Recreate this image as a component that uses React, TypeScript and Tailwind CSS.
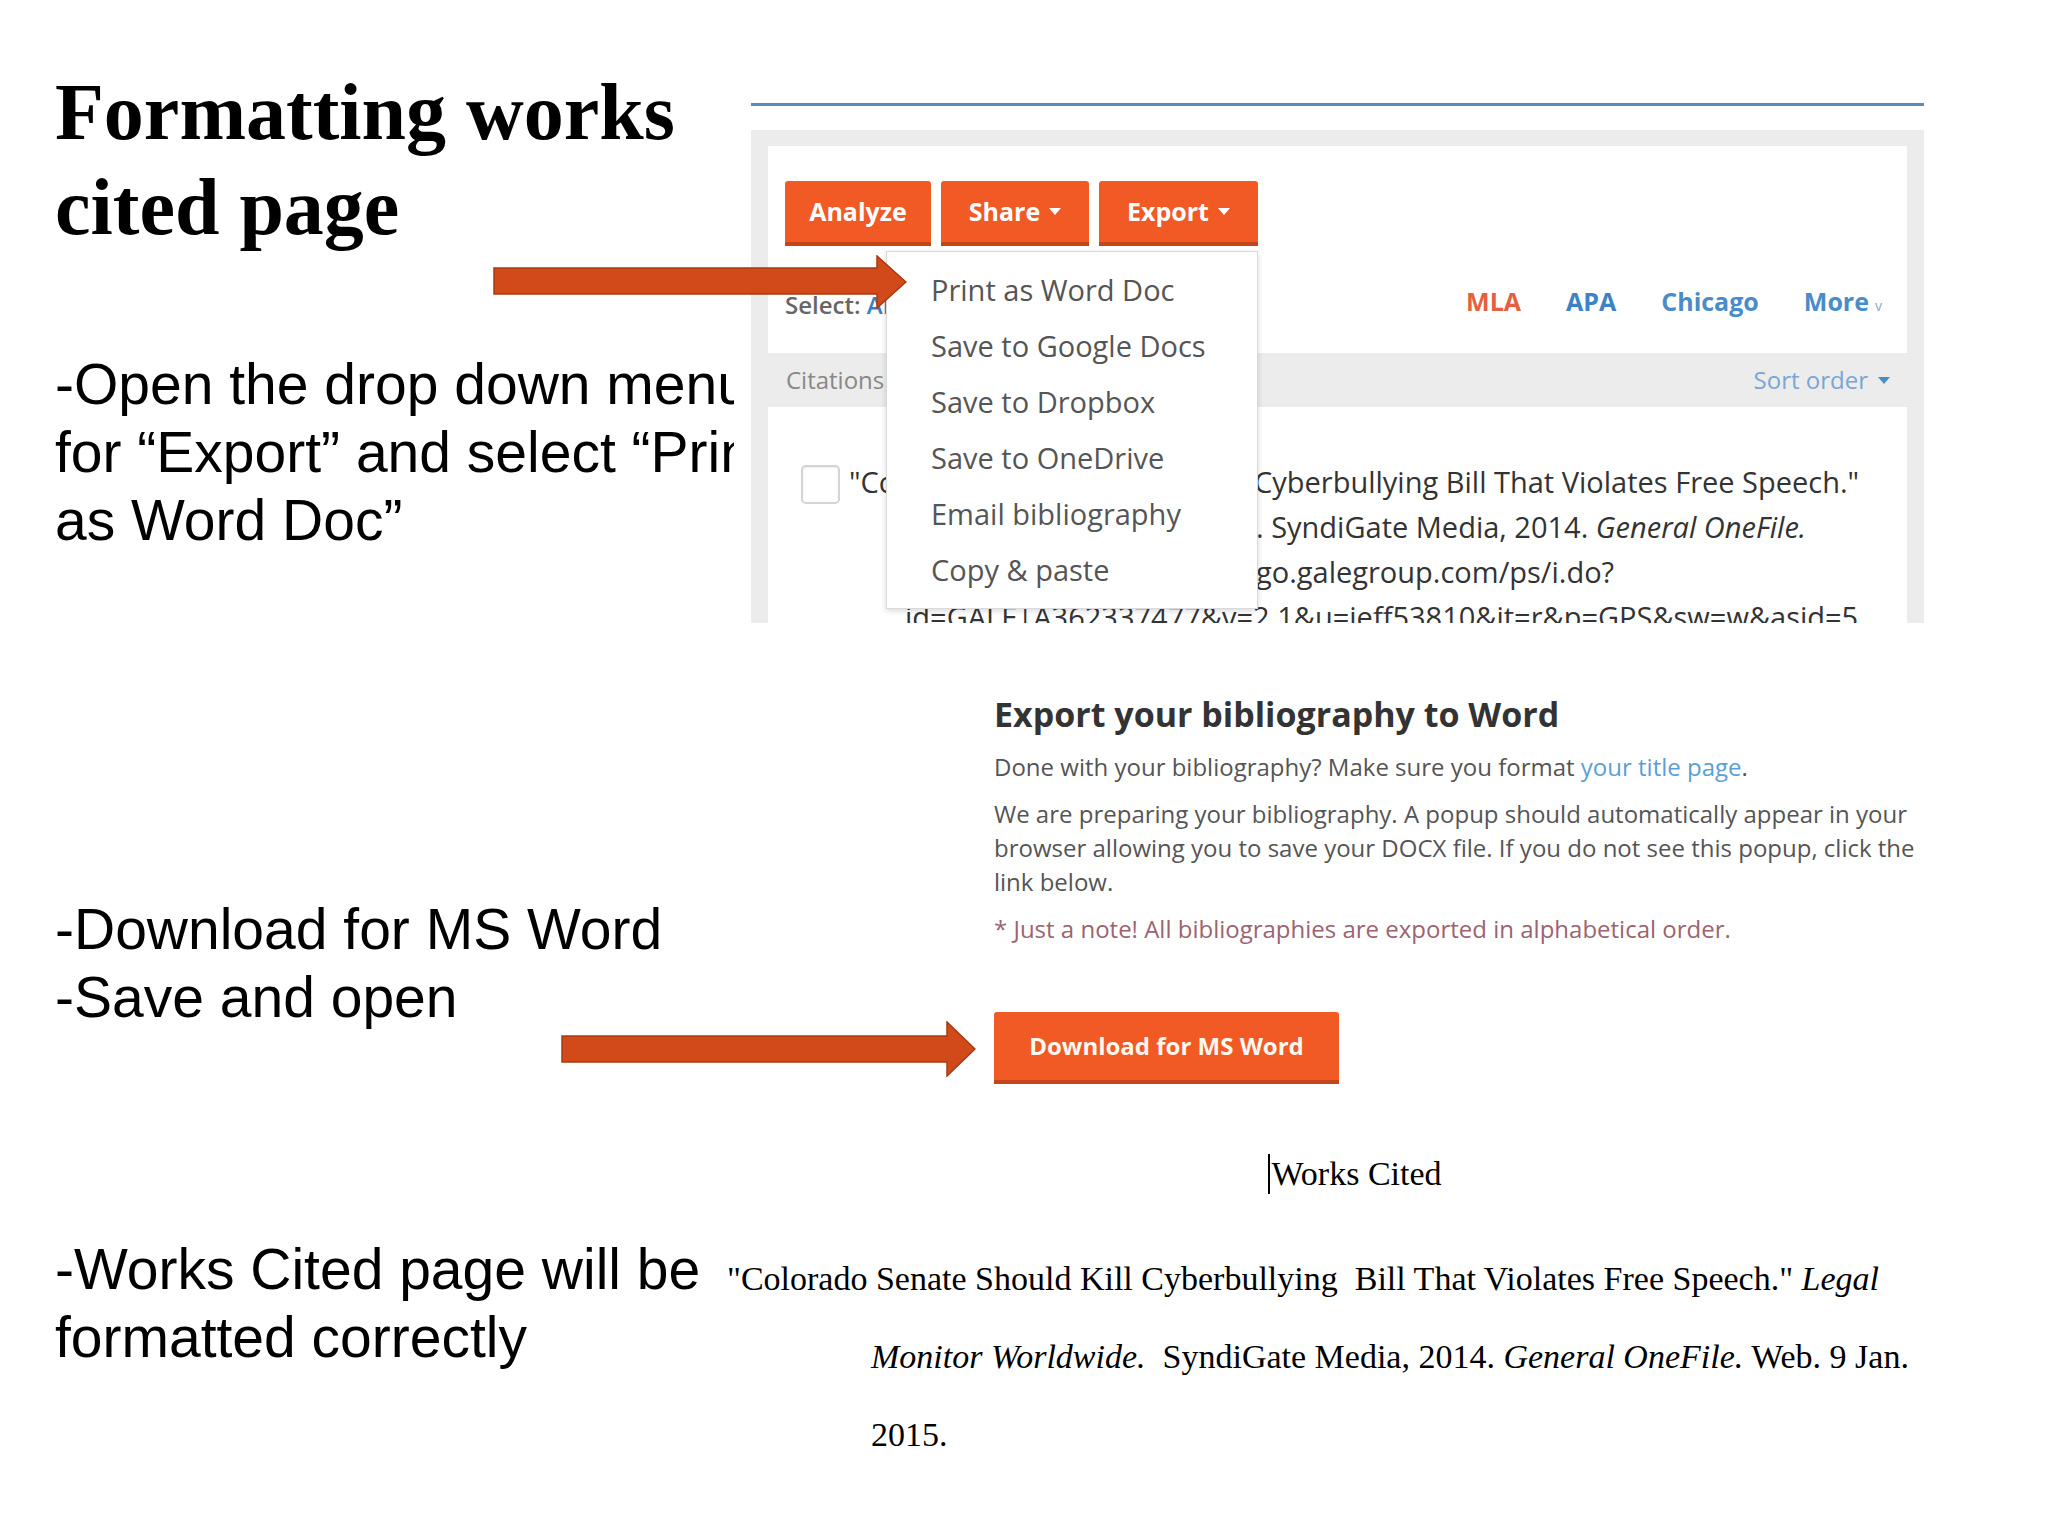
import React from "react";

const Caret = ({ color = "#ffffff", w = 12, h = 7 }: { color?: string; w?: number; h?: number }) => (
  <svg width={w} height={h} viewBox="0 0 12 7" className="inline-block">
    <path d="M0 0 H12 L6 7 Z" fill={color} />
  </svg>
);

const Arrow = ({ w, h, shaftTop, shaftBottom, base }: { w: number; h: number; shaftTop: number; shaftBottom: number; base: number }) => (
  <svg width={w} height={h} viewBox={`0 0 ${w} ${h}`}>
    <path
      d={`M1 ${shaftTop} H${base} V1 L${w - 1} ${h / 2} L${base} ${h - 1} V${shaftBottom} H1 Z`}
      fill="#d24a1a"
      stroke="#a63a12"
      strokeWidth="1.5"
      strokeLinejoin="miter"
    />
  </svg>
);

export default function App() {
  return (
    <div className="relative w-[2048px] h-[1536px] bg-white overflow-hidden text-black">
      {/* Section A */}
      <section className="flex h-[623px]">
        <div className="w-[734px] shrink-0 overflow-hidden whitespace-nowrap pl-[55px] pt-[65px]">
          <h1 className="font-['Liberation_Serif',serif] font-bold text-[80px] leading-[95px]">
            Formatting works
            <br />
            cited page
          </h1>
          <p className="mt-[95px] font-['Liberation_Sans',Arial,sans-serif] text-[57px] leading-[68px]">
            -Open the drop down menu
            <br />
            for “Export” and select “Print
            <br />
            as Word Doc”
          </p>
        </div>

        <div className="relative w-[1200px] shrink-0 h-full overflow-hidden pl-[17px] pt-[103px] font-['Open_Sans',sans-serif]">
          <div className="w-[1173px] h-[3px] bg-[#5b8bbb]" />
          <div className="mt-[24px] w-[1173px] h-[520px] bg-[#ececec] px-[17px] pt-[16px] flex flex-col">
            {/* Card 1 */}
            <div className="h-[207px] bg-white pt-[35px] pl-[17px] pr-[25px]">
              <div className="flex gap-[10px]">
                <div className="w-[146px] h-[65px] flex items-center justify-center bg-[#f15a24] border-b-4 border-[#c4451a] rounded-t-[3px] text-white font-bold text-[25px]">
                  Analyze
                </div>
                <div className="w-[148px] h-[65px] flex items-center justify-center gap-[9px] bg-[#f15a24] border-b-4 border-[#c4451a] rounded-t-[3px] text-white font-bold text-[25px]">
                  Share <Caret />
                </div>
                <div className="w-[159px] h-[65px] flex items-center justify-center gap-[9px] bg-[#f15a24] border-b-4 border-[#c4451a] rounded-t-[3px] text-white font-bold text-[25px]">
                  Export <Caret />
                </div>
              </div>
              <div className="mt-[43px] flex justify-between items-start h-[32px]">
                <span className="text-[24px] leading-[32px] font-semibold text-[#666]">
                  Select: <span className="text-[#3a7bc8]">All</span>
                </span>
                <div className="-mt-[4px] flex gap-[45px] text-[25px] leading-[32px] font-bold">
                  <span className="text-[#e4603f]">MLA</span>
                  <span className="text-[#3b82c6]">APA</span>
                  <span className="text-[#4a8cc7]">Chicago</span>
                  <span className="flex items-baseline gap-[6px] text-[#4a8cc7]">
                    More<span className="text-[14px] font-normal text-[#8aa8c8]">v</span>
                  </span>
                </div>
              </div>
            </div>
            {/* Citations row */}
            <div className="h-[54px] flex items-center justify-between pl-[18px] pr-[17px] text-[24px] leading-[32px]">
              <span className="text-[#888]">Citations (1)</span>
              <span className="flex items-center gap-[10px] text-[#7aa6d6]">
                Sort order <Caret color="#4a8cc7" />
              </span>
            </div>
            {/* Card 2 */}
            <div className="flex-1 bg-white pt-[52px] flex">
              <div className="ml-[33px] mt-[6px] w-[39px] h-[39px] shrink-0 rounded-[5px] border-2 border-[#d4d4d4] shadow-[inset_0_1px_2px_rgba(0,0,0,0.08)]" />
              <div className="ml-[9px] text-[29px] leading-[45px] text-[#333] whitespace-nowrap">
                <div>
                  <span className="inline-block w-[405px] overflow-hidden align-top">"Colorado Senate Should Kill </span>
                  Cyberbullying Bill That Violates Free Speech."
                </div>
                <div className="ml-[56px]">
                  <span className="inline-block w-[351px] overflow-hidden align-top italic">Legal Monitor Worldwide</span>
                  . SyndiGate Media, 2014. <i>General OneFile.</i>
                </div>
                <div className="ml-[56px]">
                  <span className="inline-block w-[351px] overflow-hidden align-top">Web. 9 Jan. 2015. &lt;http://</span>
                  go.galegroup.com/ps/i.do?
                </div>
                <div className="ml-[56px]">id=GALE|A362337477&amp;v=2.1&amp;u=jeff53810&amp;it=r&amp;p=GPS&amp;sw=w&amp;asid=5</div>
              </div>
            </div>
          </div>

          {/* Dropdown menu */}
          <div className="absolute left-[152px] top-[251px] w-[372px] h-[358px] bg-white border border-[#d9d9d9] shadow-[0_2px_6px_rgba(0,0,0,0.15)] pt-[10px] pl-[44px] text-[29px] leading-[56px] text-[#555]">
            <div>Print as Word Doc</div>
            <div>Save to Google Docs</div>
            <div>Save to Dropbox</div>
            <div>Save to OneDrive</div>
            <div>Email bibliography</div>
            <div>Copy &amp; paste</div>
          </div>
        </div>
      </section>

      {/* Section B */}
      <section className="flex h-[487px]">
        <div className="w-[994px] shrink-0 whitespace-nowrap pl-[55px] pt-[272px] font-['Liberation_Sans',Arial,sans-serif] text-[57px] leading-[68px]">
          -Download for MS Word
          <br />
          -Save and open
        </div>
        <div className="pt-[69px] font-['Open_Sans',sans-serif] whitespace-nowrap">
          <h2 className="text-[34px] leading-[44px] font-bold text-[#333]">Export your bibliography to Word</h2>
          <p className="mt-[14px] text-[24px] leading-[34px] text-[#555]">
            Done with your bibliography? Make sure you format <span className="text-[#5a9fd6]">your title page</span>.
          </p>
          <p className="mt-[13px] text-[24px] leading-[34px] text-[#555]">
            We are preparing your bibliography. A popup should automatically appear in your
            <br />
            browser allowing you to save your DOCX file. If you do not see this popup, click the
            <br />
            link below.
          </p>
          <p className="mt-[13px] text-[24px] leading-[34px] text-[#9b6470]">
            * Just a note! All bibliographies are exported in alphabetical order.
          </p>
          <div className="mt-[66px] w-[345px] h-[72px] flex items-center justify-center bg-[#f15a24] border-b-4 border-[#c4451a] rounded-t-[3px] text-[#fff8ee] font-bold text-[24px]">
            Download for MS Word
          </div>
        </div>
      </section>

      {/* Section C */}
      <section className="flex h-[426px]">
        <div className="w-[727px] shrink-0 whitespace-nowrap pl-[55px] pt-[125px] font-['Liberation_Sans',Arial,sans-serif] text-[57px] leading-[68px]">
          -Works Cited page will be
          <br />
          formatted correctly
        </div>
        <div className="w-[1256px] shrink-0 pt-[44px] font-['Liberation_Serif',serif] text-[34px] whitespace-pre">
          <div className="flex justify-center leading-[40px]">
            <span className="w-[2px] h-[40px] bg-black mr-[1px]" />
            <span>Works Cited</span>
          </div>
          <div className="mt-[46px] leading-[78px]">
            <div>
              "Colorado Senate Should Kill Cyberbullying  Bill That Violates Free Speech." <i>Legal</i>
            </div>
            <div className="pl-[144px]">
              <i>Monitor Worldwide.</i>  SyndiGate Media, 2014. <i>General OneFile.</i> Web. 9 Jan.
            </div>
            <div className="pl-[144px]">2015.</div>
          </div>
        </div>
      </section>

      {/* Arrows (overlay) */}
      <div className="absolute left-[493px] top-[255px]">
        <Arrow w={414} h={54} shaftTop={13} shaftBottom={39} base={384} />
      </div>
      <div className="absolute left-[561px] top-[1021px]">
        <Arrow w={415} h={56} shaftTop={15} shaftBottom={41} base={386} />
      </div>
    </div>
  );
}
